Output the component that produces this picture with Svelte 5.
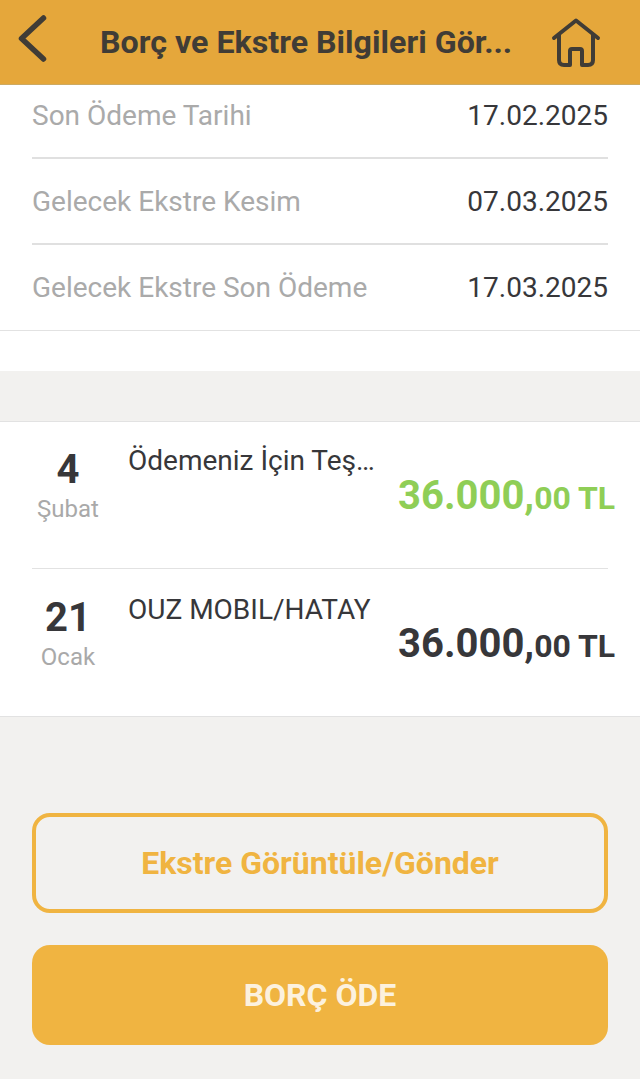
<script>
	const dates = [
		{ label: "Son Ödeme Tarihi", value: "17.02.2025" },
		{ label: "Gelecek Ekstre Kesim", value: "07.03.2025" },
		{ label: "Gelecek Ekstre Son Ödeme", value: "17.03.2025" }
	];

	const transactions = [
		{ day: "4", month: "Şubat", title: "Ödemeniz İçin Teş…", whole: "36.000", positive: true },
		{ day: "21", month: "Ocak", title: "OUZ MOBIL/HATAY", whole: "36.000", positive: false }
	];
</script>

<div class="page">
	<header class="topbar">
		<button class="icon-btn" aria-label="Geri">
			<svg width="32" height="84" viewBox="0 0 32 84">
				<path d="M27.500 18 L5.500 38.500 L27.500 59" fill="none" stroke="#403c36" stroke-width="5.500" stroke-linecap="round" stroke-linejoin="round" />
			</svg>
		</button>
		<h1>Borç ve Ekstre Bilgileri Gör...</h1>
		<button class="icon-btn" aria-label="Ana sayfa">
			<svg width="50" height="84" viewBox="0 0 50 84">
				<path d="M3 38 L25 20.500 L47 38 M8 35 V60 Q8 65 13 65 H19 V51 Q19 49 21 49 H29 Q31 49 31 51 V65 H37 Q42 65 42 60 V35" fill="none" stroke="#403c36" stroke-width="4" stroke-linecap="round" stroke-linejoin="round" />
			</svg>
		</button>
	</header>

	<section class="dates">
		{#each dates as d}
			<div class="date-row">
				<span class="date-label">{d.label}</span>
				<span class="date-value">{d.value}</span>
			</div>
		{/each}
	</section>

	<section class="transactions">
		{#each transactions as t}
			<div class="tx">
				<div class="tx-date">
					<span class="tx-day">{t.day}</span>
					<span class="tx-month">{t.month}</span>
				</div>
				<div class="tx-title">{t.title}</div>
				<div class="tx-amount" class:positive={t.positive}>{t.whole},<small>00 TL</small></div>
			</div>
		{/each}
	</section>

	<div class="actions">
		<button class="btn outline">Ekstre Görüntüle/Gönder</button>
		<button class="btn solid">BORÇ ÖDE</button>
	</div>
</div>

<style>
	:global(body) {
		margin: 0;
		background: #f2f1ef;
	}
	.page {
		width: 640px;
		height: 1079px;
		overflow: hidden;
		background: #f2f1ef;
		font-family: Roboto, "Liberation Sans", sans-serif;
		color: #37373a;
	}
	.topbar {
		position: relative;
		z-index: 1;
		height: 85px;
		box-sizing: border-box;
		border-bottom: 1px solid #cdaa62;
		background: #e5a73b;
		display: flex;
		align-items: center;
		padding: 0 39px 0 16px;
	}
	.icon-btn {
		background: none;
		border: 0;
		padding: 0;
		display: flex;
	}
	.topbar h1 {
		flex: 1;
		min-width: 0;
		margin: 0;
		padding-left: 52px;
		font-size: 32.2px;
		font-weight: 700;
		color: #403c36;
		white-space: nowrap;
		overflow: hidden;
	}
	.dates {
		margin-top: -12px;
		height: 258px;
		box-sizing: border-box;
		padding: 0 32px;
		background: #fff;
		border-bottom: 1px solid #e2e2e2;
		box-shadow: 0 40px 0 #fff;
	}
	.date-row {
		height: 86px;
		box-sizing: border-box;
		padding-top: 1px;
		display: flex;
		justify-content: space-between;
		align-items: center;
		font-size: 28px;
		border-bottom: 2px solid #e0e0e0;
	}
	.date-row:last-child {
		padding-top: 0;
		padding-bottom: 2px;
		border-bottom: 0;
	}
	.date-label {
		color: #aaaaaa;
	}
	.transactions {
		margin-top: 90px;
		background: #fff;
		border-top: 1px solid #e2e2e2;
		border-bottom: 1px solid #e2e2e2;
	}
	.tx {
		position: relative;
		height: 146px;
		box-sizing: border-box;
		margin: 0 32px;
		display: flex;
	}
	.tx + .tx {
		border-top: 1px solid #e2e2e2;
		height: 148px;
	}
	.tx-date {
		width: 72px;
		margin-right: 24px;
		padding-top: 24px;
		display: flex;
		flex-direction: column;
		align-items: center;
	}
	.tx + .tx .tx-date {
		padding-top: 25px;
	}
	.tx-day {
		font-size: 40px;
		font-weight: 700;
		line-height: 47px;
	}
	.tx-month {
		margin-top: 2px;
		font-size: 24px;
		line-height: 28px;
		color: #a9a9a9;
	}
	.tx-title {
		width: 260px;
		padding-top: 23px;
		font-size: 28px;
		line-height: 32px;
		white-space: nowrap;
	}
	.tx + .tx .tx-title {
		padding-top: 25px;
	}
	.tx-amount {
		position: absolute;
		left: 366px;
		top: 49px;
		font-size: 40px;
		line-height: 50px;
		font-weight: 700;
		white-space: nowrap;
	}
	.tx + .tx .tx-amount {
		top: 50px;
	}
	.tx-amount small {
		font-size: 32px;
	}
	.positive {
		color: #8fce56;
	}
	.actions {
		padding: 96px 32px 0;
		display: flex;
		flex-direction: column;
		gap: 32px;
	}
	.btn {
		height: 100px;
		box-sizing: border-box;
		border-radius: 18px;
		font-family: inherit;
		font-size: 32px;
		font-weight: 700;
	}
	.outline {
		background: transparent;
		border: 4px solid #f0b441;
		color: #f0b441;
	}
	.solid {
		background: #f0b441;
		border: 0;
		color: #fcf1de;
	}
</style>
